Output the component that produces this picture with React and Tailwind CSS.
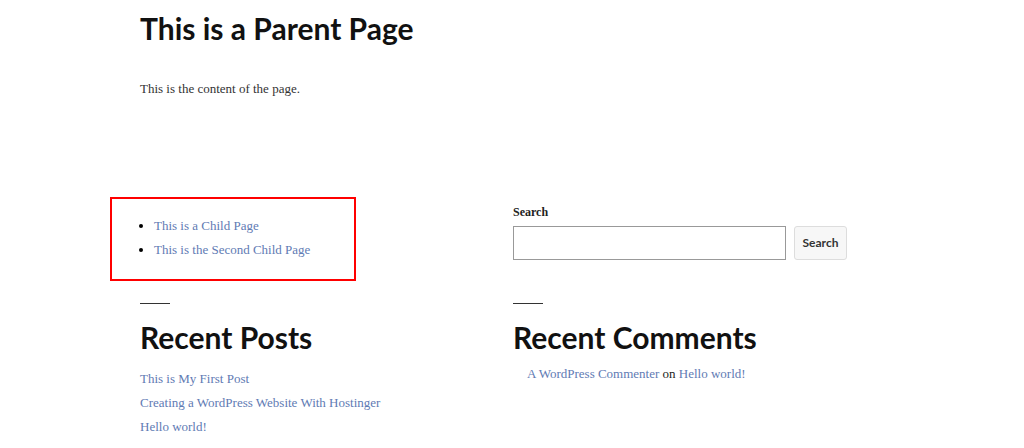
import React from 'react';

const serif = { fontFamily: '"Liberation Serif", "DejaVu Serif", serif' };
const sans = { fontFamily: 'Lato, "Noto Sans", sans-serif' };

const childPages = ['This is a Child Page', 'This is the Second Child Page'];
const recentPosts = ['This is My First Post', 'Creating a WordPress Website With Hostinger', 'Hello world!'];

function Separator() {
  return <div className="w-[30px] h-px bg-[#333]" />;
}

export default function App() {
  return (
    <div className="min-h-screen bg-white text-[#222]" style={serif}>
      <div className="pl-[140px] pr-[177px]">
        {/* Page */}
        <h1 className="pt-[10px] text-[30px] leading-[36px] font-bold text-[#111]" style={sans}>
          This is a Parent Page
        </h1>
        <p className="mt-[34px] text-[13px] leading-[18px] text-[#333]">This is the content of the page.</p>

        {/* Widgets */}
        <div className="mt-[99px] grid grid-cols-[340px_1fr] gap-x-[33px]">
          <div>
            <div className="-ml-[30px] w-[246px] h-[84px] border-2 border-[#ff0000] pt-[15px]">
              <ul className="list-disc pl-[42px] text-[13px] leading-[24px] marker:text-black">
                {childPages.map((p) => (
                  <li key={p}>
                    <a className="text-[#5f7bb4]">{p}</a>
                  </li>
                ))}
              </ul>
            </div>
          </div>
          <div className="pt-[7px]">
            <label className="block text-[12px] leading-[16px] font-bold text-[#222]">Search</label>
            <div className="mt-[6px] flex gap-[8px]">
              <input className="w-[273px] h-[34px] border border-[#999] bg-white" />
              <button
                className="w-[53px] h-[34px] border border-[#ddd] rounded-[3px] bg-[#f7f7f7] text-[12px] font-bold text-[#333]"
                style={sans}
              >
                Search
              </button>
            </div>
          </div>

          <div className="mt-[22px]">
            <Separator />
            <h2 className="mt-[15px] text-[30px] leading-[36px] font-bold text-[#111]" style={sans}>
              Recent Posts
            </h2>
            <ul className="mt-[12px] text-[13px] leading-[24px]">
              {recentPosts.map((p) => (
                <li key={p}>
                  <a className="text-[#5f7bb4]">{p}</a>
                </li>
              ))}
            </ul>
          </div>
          <div className="mt-[22px]">
            <Separator />
            <h2 className="mt-[15px] text-[30px] leading-[36px] font-bold text-[#111]" style={sans}>
              Recent Comments
            </h2>
            <ul className="mt-[7px] pl-[14px] text-[13px] leading-[24px]">
              <li>
                <a className="text-[#5f7bb4]">A WordPress Commenter</a> on{' '}
                <a className="text-[#5f7bb4]">Hello world!</a>
              </li>
            </ul>
          </div>
        </div>
      </div>
    </div>
  );
}
